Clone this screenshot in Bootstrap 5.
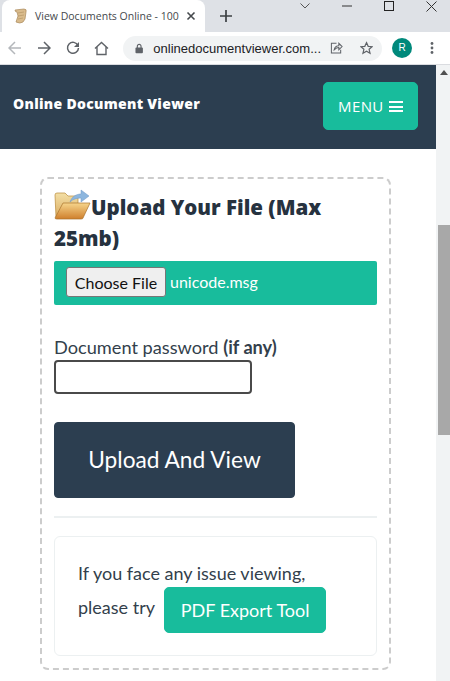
<!DOCTYPE html>
<html lang="en">
<head>
    <meta charset="UTF-8">
    <meta name="viewport" content="width=device-width, initial-scale=1">
    <title>View Documents Online</title>
    <link href="https://cdn.jsdelivr.net/npm/bootstrap@5.3.0/dist/css/bootstrap.min.css" rel="stylesheet">
    <script src="https://cdn.jsdelivr.net/npm/bootstrap@5.3.0/dist/js/bootstrap.bundle.min.js"></script>
<style>
    html, body { margin: 0; height: 681px; overflow: hidden; background: #fff; }
    body { font-family: Lato, "Liberation Sans", sans-serif; color: #2c3e50; }

    /* browser chrome */
    .tab-strip { height: 32px; background: #dee1e6; }
    .chrome-tab { width: 203px; height: 32px; margin-left: 2px; background: #fff; border-radius: 8px 8px 0 0; padding: 0 9px 0 12px; font: 10.500px "Open Sans", "Liberation Sans", sans-serif; color: #45494d; }
    .tab-title { margin-left: 7px; white-space: nowrap; }
    .new-tab { margin-left: 14px; }
    .win-row { margin-right: -2px; }
    .win-btn { width: 42px; height: 12px; }
    .tool-row { height: 33px; background: #fff; border-bottom: 1px solid #dadce0; }
    .tool-btn { width: 29px; height: 28px; flex: none; }
    .omni { width: 259px; height: 25px; margin-left: 7px; background: #f1f3f4; border-radius: 13px; padding: 0 9px 0 12px; font: 13px "Liberation Sans", sans-serif; color: #202124; flex: none; }
    .omni-url { margin-left: 10px; white-space: nowrap; }
    .omni-share { margin-left: 9px; }
    .omni-star { margin-left: 17px; }
    .avatar-r { width: 20px; height: 20px; border-radius: 50%; background: #00897b; color: #fff; font: 10px/20px "Liberation Sans", sans-serif; text-align: center; margin-left: 10px; }
    .dots { margin-left: 18px; }

    /* page */
    .page-frame { height: 616px; }
    .page-main { width: 436px; flex: none; overflow: hidden; }
    .page-scroll { width: 14px; flex: none; background: #f1f3f4; position: relative; }
    .scroll-thumb { position: absolute; left: 2px; right: 0; top: 160px; height: 210px; background: #a8a8a8; }
    .scroll-arrow { position: absolute; left: 4px; top: 5px; width: 0; height: 0; border: 4px solid transparent; border-top: 0; border-bottom: 5px solid #505050; }
    .site-nav { height: 84px; background: #2c3e50; padding: 0 18px 0 13px; }
    .site-brand { font: 800 14px "Open Sans", "Liberation Sans", sans-serif; letter-spacing: .3px; color: #fff; margin-top: -8px; }
    .menu-btn { width: 95px; height: 48px; background: #18bc9c; border-color: #18bc9c; color: #fff; font: 400 15px "Open Sans", sans-serif; letter-spacing: .4px; border-radius: 5px; padding: 0; margin-top: -2px; }
    .burger { display: inline-block; width: 14px; height: 12px; margin-left: 1px; vertical-align: -1px; background: repeating-linear-gradient(#fff 0 2.500px, transparent 2.500px 4.500px); }
    .upload-box { width: 351px; height: 493px; margin: 28px 0 0 40px; border: 2px dashed #ccc; border-radius: 8px; padding: 13px 12px 0; }
    .upload-title { font: 800 20.500px/31px "Open Sans", "Liberation Sans", sans-serif; color: #26323f; margin: 0 0 7px; }
    .upload-title svg { vertical-align: -5px; margin-top: -6px; }
    .file-bar { height: 44px; background: #18bc9c; padding: 0 0 2px 12px; border-radius: 2px; color: #fff; font-size: 16px; gap: 4px; }
    .file-pick { width: 100px; height: 30px; padding: 0; background: #efefef; border: 1px solid #767676; border-radius: 3px; font: 16px Lato, sans-serif; color: #111; }
    .pw-label { font-size: 18.200px; line-height: 22px; margin: 31px 0 2px; color: #333f4c; }
    .pw-input { width: 198px; height: 34px; border: 2px solid #4a4a4a; border-radius: 4px; display: block; background: #fff; }
    .view-btn { width: 241px; height: 76px; margin-top: 28px; background: #2c3e50; border-color: #2c3e50; color: #fff; font-size: 22.700px; border-radius: 4px; padding: 0; }
    .box-rule { margin: 18px 0 18px; border: 0; border-top: 2px solid #ecf0f1; opacity: 1; }
    .help-card { height: 120px; border: 1px solid #ecf0f1; border-radius: 6px; padding: 23px 23px 0; font-size: 18px; line-height: 27px; color: #333f4c; }
    .help-line { height: 27px; }
    .export-btn { width: 162px; height: 46px; margin-left: 5px; background: #18bc9c; border-color: #18bc9c; color: #fff; font-size: 18px; border-radius: 5px; padding: 0; vertical-align: -3px; }
</style>
</head>
<body>
    <!-- browser tab strip -->
    <div class="tab-strip d-flex align-items-start">
        <div class="chrome-tab d-flex align-items-center">
            <svg width="14" height="16" viewBox="0 0 14 16"><path d="M1 2 10 1Q13 1 12 4L11 11 9 14Q6 16 2 14L4 8 3 4Q1 4 1 2Z" fill="#d9bb8c" stroke="#a9885a" stroke-width=".7"/><path d="M4 5 10 4M4 8 10 7M4 11 9 10" stroke="#b0905f" stroke-width=".6"/></svg>
            <span class="tab-title">View Documents Online - 100</span>
            <svg class="ms-auto" width="10" height="10" viewBox="0 0 10 10"><path d="M1.500 1.500 8.500 8.500M8.500 1.500 1.500 8.500" stroke="#45494d" stroke-width="1.600"/></svg>
        </div>
        <svg class="new-tab mt-2" width="14" height="16" viewBox="0 0 14 16"><path d="M7 2V14M1 8H13" stroke="#3c4043" stroke-width="1.700"/></svg>
        <div class="ms-auto d-flex win-row">
            <div class="win-btn d-flex align-items-center justify-content-center"><svg width="10" height="6" viewBox="0 0 10 6"><path d="M.5.500 5 5 9.500.500" fill="none" stroke="#555" stroke-width="1"/></svg></div>
            <div class="win-btn d-flex align-items-center justify-content-center"><svg width="10" height="2" viewBox="0 0 10 2"><path d="M0 1H10" stroke="#333" stroke-width="1"/></svg></div>
            <div class="win-btn d-flex align-items-center justify-content-center"><svg width="10" height="10" viewBox="0 0 10 10"><rect x=".5" y=".5" width="9" height="9" fill="none" stroke="#222" stroke-width="1"/></svg></div>
            <div class="win-btn d-flex align-items-center justify-content-center"><svg width="11" height="11" viewBox="0 0 11 11"><path d="M.5.500 10.500 10.500M10.500.500.5 10.500" stroke="#333" stroke-width="1"/></svg></div>
        </div>
    </div>

    <!-- browser toolbar -->
    <div class="tool-row d-flex align-items-center">
        <div class="tool-btn d-flex align-items-center justify-content-center"><svg width="14" height="14" viewBox="0 0 14 14"><path d="M13 7H1.500M7 1 1 7 7 13" fill="none" stroke="#b4b7bb" stroke-width="1.500"/></svg></div>
        <div class="tool-btn d-flex align-items-center justify-content-center"><svg width="14" height="14" viewBox="0 0 14 14"><path d="M1 7H12.500M7 1 13 7 7 13" fill="none" stroke="#5f6368" stroke-width="1.500"/></svg></div>
        <div class="tool-btn d-flex align-items-center justify-content-center"><svg width="14" height="14" viewBox="0 0 14 14"><path d="M12 4.500A5.500 5.500 0 1 0 12.500 7" fill="none" stroke="#5f6368" stroke-width="1.500"/><path d="M13 1V6H8Z" fill="#5f6368"/></svg></div>
        <div class="tool-btn d-flex align-items-center justify-content-center"><svg width="15" height="15" viewBox="0 0 15 15"><path d="M1 7.500 7.500 1.500 14 7.500M3 6V13.500H12V6" fill="none" stroke="#5f6368" stroke-width="1.400"/></svg></div>
        <div class="omni d-flex align-items-center">
            <svg width="9" height="11" viewBox="0 0 9 11"><rect x=".5" y="4.500" width="8" height="6" rx="1" fill="#5f6368"/><path d="M2.500 5V3A2 2 0 0 1 6.500 3V5" fill="none" stroke="#5f6368" stroke-width="1.200"/></svg>
            <span class="omni-url">onlinedocumentviewer.com...</span>
            <svg class="omni-share" width="14" height="14" viewBox="0 0 14 14"><path d="M7 2H1.500V12.500H11.500V9" fill="none" stroke="#5f6368" stroke-width="1.100"/><path d="M4.500 9C5 6 7 4.500 9.500 4.500V2L13 5.500 9.500 9V6.500C7.500 6.500 6 7.500 4.500 9Z" fill="none" stroke="#5f6368" stroke-width="1.100"/></svg>
            <svg class="omni-star" width="14" height="14" viewBox="0 0 14 14"><path d="M7 1.200 8.800 5.200 13 5.600 9.800 8.400 10.800 12.600 7 10.400 3.200 12.600 4.200 8.400 1 5.600 5.200 5.200Z" fill="none" stroke="#5f6368" stroke-width="1.300"/></svg>
        </div>
        <div class="avatar-r">R</div>
        <svg class="dots" width="4" height="14" viewBox="0 0 4 14"><circle cx="2" cy="2.500" r="1.400" fill="#5f6368"/><circle cx="2" cy="7" r="1.400" fill="#5f6368"/><circle cx="2" cy="11.500" r="1.400" fill="#5f6368"/></svg>
    </div>

    <div class="page-frame d-flex">
        <div class="page-main">
            <nav class="site-nav d-flex align-items-center justify-content-between">
                <span class="site-brand">Online Document Viewer</span>
                <button class="btn menu-btn" type="button">MENU <span class="burger"></span></button>
            </nav>

            <div class="upload-box">
                <h4 class="upload-title">
                    <svg width="37" height="31" viewBox="0 0 37 31">
                        <defs>
                            <linearGradient id="folderBack" x1="0" y1="0" x2="0" y2="1"><stop offset="0" stop-color="#f3dfa6"/><stop offset="1" stop-color="#dcae62"/></linearGradient>
                            <linearGradient id="folderFront" x1="0" y1="0" x2="0" y2="1"><stop offset="0" stop-color="#f6d58c"/><stop offset="1" stop-color="#cf7f2c"/></linearGradient>
                        </defs>
                        <path d="M1 6Q1 4 3 4H11L14 7H24V28H2Z" fill="url(#folderBack)" stroke="#b98a3a" stroke-width=".7"/>
                        <path d="M1 29 9 14H36L29 29Q29 30 27 30H3Q1 30 1 29Z" fill="url(#folderFront)" stroke="#a9732c" stroke-width=".7"/>
                        <path d="M16 13C18 7 23 5 27 5V1L35 7 27 13V9C23 9 19 10 16 13Z" fill="#8db6de" stroke="#6d97c4" stroke-width=".5"/>
                    </svg>Upload Your File (Max 25mb)
                </h4>
                <div class="file-bar d-flex align-items-center">
                    <button class="file-pick" type="button">Choose File</button>
                    <span>unicode.msg</span>
                </div>
                <p class="pw-label">Document password <b>(if any)</b></p>
                <input class="pw-input" type="password" aria-label="Document password">
                <button class="btn view-btn" type="button">Upload And View</button>
                <hr class="box-rule">
                <div class="help-card">
                    <div class="help-line">If you face any issue viewing,</div>
                    <div class="help-line">please try <button class="btn export-btn" type="button">PDF Export Tool</button></div>
                </div>
            </div>
        </div>
        <div class="page-scroll">
            <span class="scroll-arrow"></span>
            <div class="scroll-thumb"></div>
        </div>
    </div>
</body>
</html>
